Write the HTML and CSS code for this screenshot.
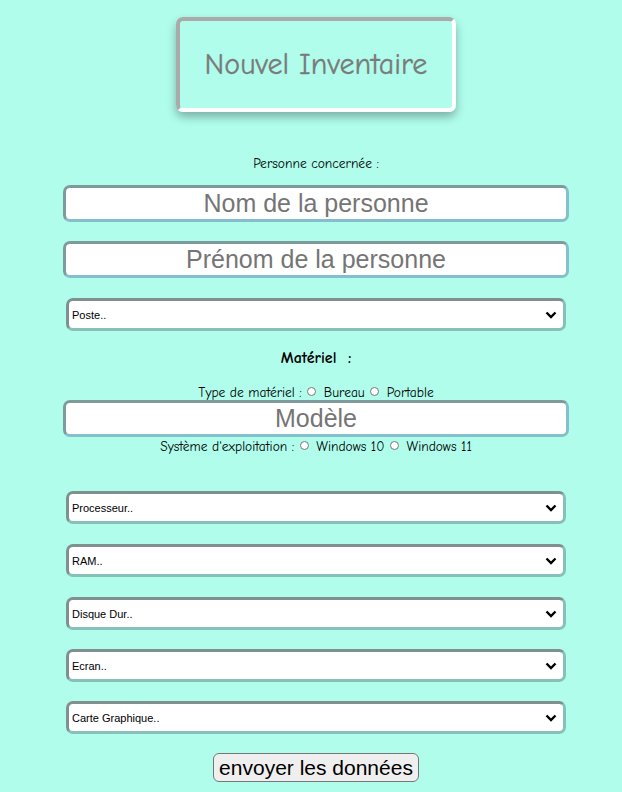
FILE: index.html
```html
<!DOCTYPE html>
<html lang="fr">
<head>
<meta charset="utf-8">
<title>Nouvel Inventaire</title>
<link rel="stylesheet" href="styles.css">
</head>
<body>
<div class="page">
  <div class="title"><h1>Nouvel Inventaire</h1></div>
  <form class="form">
    <p class="label first">Personne concernée :</p>
    <input class="field" type="text" placeholder="Nom de la personne">
    <input class="field gap" type="text" placeholder="Prénom de la personne">
    <select class="choice gap20"><option>Poste..</option></select>
    <p class="section">Matériel&nbsp; :</p>
    <p class="label radios type">Type de matériel : <input type="radio" name="t" class="radio"> Bureau <input type="radio" name="t" class="radio"> Portable</p>
    <input class="field" type="text" placeholder="Modèle">
    <p class="label radios os">Système d'exploitation : <input type="radio" name="o" class="radio"> Windows 10 <input type="radio" name="o" class="radio"> Windows 11</p>
    <select class="choice first-sel"><option>Processeur..</option></select>
    <select class="choice gap20"><option>RAM..</option></select>
    <select class="choice gap20"><option>Disque Dur..</option></select>
    <select class="choice gap19"><option>Ecran..</option></select>
    <select class="choice gap19"><option>Carte Graphique..</option></select>
    <div class="actions"><button type="button" class="send">envoyer les données</button></div>
  </form>
</div>
</body>
</html>
```
FILE: styles.css
```css
html, body {
  margin: 0;
  padding: 0;
  background: #b0fdec;
}
body {
  font-family: "Comic Sans MS", "Comic Neue", "Noto Sans", sans-serif;
  color: #000;
}
.page {
  width: 506px;
  margin-left: 63px;
  padding-top: 17px;
}
.title {
  box-sizing: border-box;
  width: 280px;
  height: 95px;
  margin: 0 auto;
  border: 4px solid;
  border-color: #aaaaaa #ffffff #ffffff #aaaaaa;
  border-radius: 7px;
  box-shadow: 0 5px 10px rgba(0, 0, 0, 0.3);
  display: flex;
  align-items: center;
  justify-content: center;
}
.title h1 {
  margin: 0;
  font-size: 30px;
  font-weight: normal;
  color: #7a7a7a;
  -webkit-text-stroke: 0.3px #7a7a7a;
}
.form {
  display: flex;
  flex-direction: column;
}
.label {
  margin: 0;
  font-size: 13.5px;
  line-height: 16px;
  text-align: center;
}
.label.first {
  margin-top: 44px;
  margin-bottom: 13px;
}
.type {
  margin-top: 17px;
  margin-bottom: -1px;
}
.os {
  padding-top: 2px;
}
.section {
  margin: 17px 0 0;
  font-size: 16px;
  font-weight: bold;
  line-height: 20px;
  text-align: center;
}
.radio {
  width: 9px;
  height: 9px;
  margin: 0 3px 0 1px;
  vertical-align: 1px;
}
.field {
  box-sizing: border-box;
  width: 506px;
  height: 37px;
  margin: 0;
  padding: 0 4px;
  border: 3px solid;
  border-color: #7f9a9c #84c0cc #84c0cc #7f9a9c;
  border-radius: 7px;
  background: #fff;
  font-family: "Liberation Sans", Arial, sans-serif;
  font-size: 25px;
  text-align: center;
  outline: none;
}
.field::placeholder {
  color: #757575;
}
.gap {
  margin-top: 19px;
}
.choice {
  box-sizing: border-box;
  width: 500px;
  height: 33px;
  margin: 0 0 0 3px;
  padding: 0 0 0 3px;
  border: 3px solid;
  border-color: #7f908f #86c0b8 #86c0b8 #7f908f;
  border-radius: 7px;
  background-color: #fff;
  background-image: url("data:image/svg+xml,%3Csvg xmlns='http://www.w3.org/2000/svg' width='12' height='8' viewBox='0 0 12 8'%3E%3Cpath d='M1.5 1.5 L6 6 L10.5 1.5' fill='none' stroke='%23000' stroke-width='2.4'/%3E%3C/svg%3E");
  background-repeat: no-repeat;
  background-position: right 6px center;
  appearance: none;
  -webkit-appearance: none;
  font-family: "Liberation Sans", Arial, sans-serif;
  font-size: 11px;
  color: #000;
}
.gap20 {
  margin-top: 20px;
}
.gap19 {
  margin-top: 19px;
}
.first-sel {
  margin-top: 36px;
}
.actions {
  margin-top: 19px;
  display: flex;
  justify-content: center;
}
.send {
  box-sizing: border-box;
  height: 29px;
  padding: 0 5px;
  border: 1px solid #767676;
  border-radius: 6px;
  background: #efefef;
  font-family: "Liberation Sans", Arial, sans-serif;
  font-size: 21px;
  color: #000;
}
```
